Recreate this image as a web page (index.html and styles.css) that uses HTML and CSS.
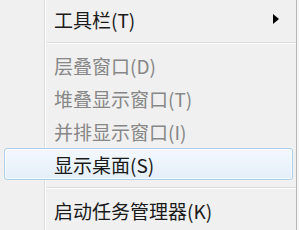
FILE: index.html
```html
<!DOCTYPE html>
<html lang="zh-CN">
<head>
<meta charset="utf-8">
<link rel="stylesheet" href="styles.css">
</head>
<body>
<div class="menu">
  <div class="item submenu"><span class="label">工具栏(T)</span><span class="arrow"></span></div>
  <div class="sep"></div>
  <div class="item disabled"><span class="label">层叠窗口(D)</span></div>
  <div class="item disabled"><span class="label">堆叠显示窗口(T)</span></div>
  <div class="item disabled"><span class="label">并排显示窗口(I)</span></div>
  <div class="item active"><span class="label">显示桌面(S)</span></div>
  <div class="sep"></div>
  <div class="item"><span class="label">启动任务管理器(K)</span></div>
</div>
</body>
</html>
```
FILE: styles.css
```css
html, body {
  margin: 0;
  padding: 0;
  background: #f7f7f7;
}
body {
  width: 299px;
  height: 230px;
  overflow: hidden;
  font-family: "Noto Sans CJK SC", "Noto Sans", sans-serif;
  font-size: 19px;
}
.menu {
  width: 297px;
  height: 230px;
  box-sizing: border-box;
  border-right: 1px solid #b8b8b8;
  padding-top: 2px;
  background:
    linear-gradient(to right, transparent 44px, #dcdcdc 44px, #dcdcdc 45px, #ffffff 45px, #ffffff 46px, transparent 46px),
    #f0f0f0;
}
.item {
  height: 32px;
  margin: 1px 3px 1px 4px;
  padding-left: 49px;
  padding-right: 13px;
  box-sizing: border-box;
  display: flex;
  align-items: center;
  color: #1a1a1a;
  border: 1px solid transparent;
  border-radius: 3px;
}
.label {
  flex: 1;
  line-height: 1;
}
.disabled {
  color: #878787;
}
.active {
  border-color: #afd0ea;
  background: linear-gradient(to bottom, #f3f8fd, #e4eff9);
  box-shadow: inset 0 0 0 1px rgba(255, 255, 255, 0.7);
}
.arrow {
  width: 0;
  height: 0;
  border-top: 5px solid transparent;
  border-bottom: 5px solid transparent;
  border-left: 6px solid #000;
}
.sep {
  height: 0;
  margin: 7px 0 5px 47px;
  border-top: 1px solid #dcdcdc;
  border-bottom: 1px solid #ffffff;
}
```
